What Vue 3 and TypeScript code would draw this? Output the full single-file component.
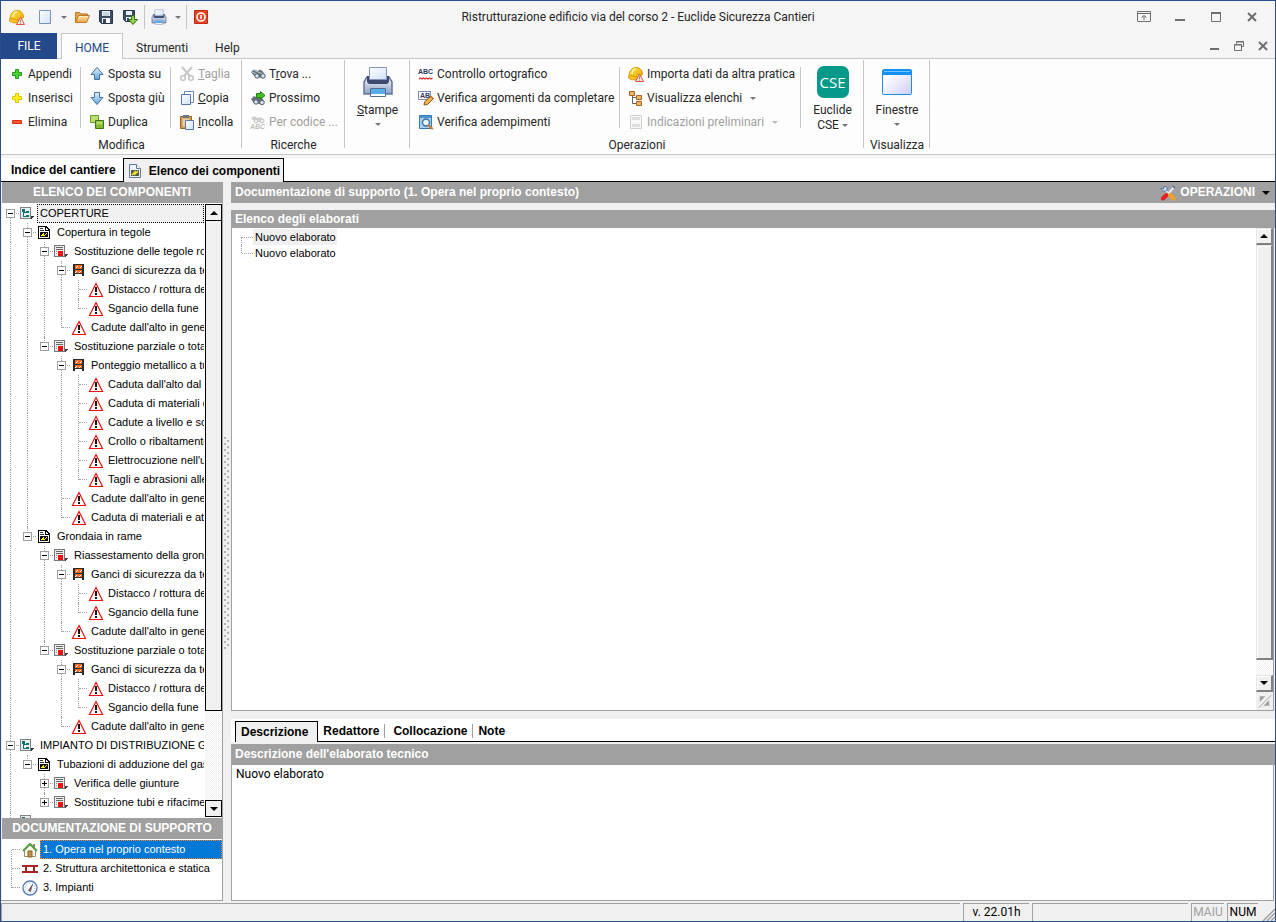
<script setup lang="ts">
import { computed, ref } from 'vue'

interface Command { icon: string; label: string; key?: number; disabled?: boolean; menu?: boolean; mark?: string }
interface Node { depth: number; icon: string; label: string; open?: boolean }
interface Row extends Node { guides: boolean[]; last: boolean; first: boolean }

const edit: Command[][] = [
  [
    { icon: 'plus-green', label: 'Appendi' },
    { icon: 'plus-yellow', label: 'Inserisci' },
    { icon: 'minus-red', label: 'Elimina' },
  ],
  [
    { icon: 'arrow-up', label: 'Sposta su' },
    { icon: 'arrow-down', label: 'Sposta giù' },
    { icon: 'duplicate', label: 'Duplica' },
  ],
  [
    { icon: 'cut', label: 'Taglia', key: 0, disabled: true },
    { icon: 'copy', label: 'Copia', key: 0 },
    { icon: 'paste', label: 'Incolla', key: 0 },
  ],
]
const search: Command[][] = [[
  { icon: 'find', label: 'Trova ...', key: 1 },
  { icon: 'find-next', label: 'Prossimo' },
  { icon: 'find-code', label: 'Per codice ...', disabled: true, mark: 'ABC' },
]]
const operations: Command[][] = [
  [
    { icon: 'spell', label: 'Controllo ortografico', mark: 'ABC' },
    { icon: 'check-args', label: 'Verifica argomenti da completare', mark: 'AB' },
    { icon: 'check-duties', label: 'Verifica adempimenti' },
  ],
  [
    { icon: 'helmet', label: 'Importa dati da altra pratica' },
    { icon: 'lists', label: 'Visualizza elenchi', menu: true },
    { icon: 'form', label: 'Indicazioni preliminari', disabled: true, menu: true },
  ],
]
const blocks = [
  { id: 'edit', title: 'Modifica', columns: edit },
  { id: 'search', title: 'Ricerche', columns: search },
]

const nodes: Node[] = [
  { depth: 0, icon: 'tree', label: 'COPERTURE', open: true },
  { depth: 1, icon: 'sheet', label: 'Copertura in tegole', open: true },
  { depth: 2, icon: 'work', label: 'Sostituzione delle tegole rot', open: true },
  { depth: 3, icon: 'barrier', label: 'Ganci di sicurezza da te', open: true },
  { depth: 4, icon: 'warn', label: 'Distacco / rottura de' },
  { depth: 4, icon: 'warn', label: 'Sgancio della fune' },
  { depth: 3, icon: 'warn', label: "Cadute dall'alto in gener" },
  { depth: 2, icon: 'work', label: 'Sostituzione parziale o total', open: true },
  { depth: 3, icon: 'barrier', label: 'Ponteggio metallico a tu', open: true },
  { depth: 4, icon: 'warn', label: "Caduta dall'alto dal p" },
  { depth: 4, icon: 'warn', label: 'Caduta di materiali d' },
  { depth: 4, icon: 'warn', label: 'Cadute a livello e sc' },
  { depth: 4, icon: 'warn', label: 'Crollo o ribaltamento' },
  { depth: 4, icon: 'warn', label: "Elettrocuzione nell'u" },
  { depth: 4, icon: 'warn', label: 'Tagli e abrasioni alle' },
  { depth: 3, icon: 'warn', label: "Cadute dall'alto in gener" },
  { depth: 3, icon: 'warn', label: 'Caduta di materiali e attr' },
  { depth: 1, icon: 'sheet', label: 'Grondaia in rame', open: true },
  { depth: 2, icon: 'work', label: 'Riassestamento della gronc', open: true },
  { depth: 3, icon: 'barrier', label: 'Ganci di sicurezza da te', open: true },
  { depth: 4, icon: 'warn', label: 'Distacco / rottura de' },
  { depth: 4, icon: 'warn', label: 'Sgancio della fune' },
  { depth: 3, icon: 'warn', label: "Cadute dall'alto in gener" },
  { depth: 2, icon: 'work', label: 'Sostituzione parziale o total', open: true },
  { depth: 3, icon: 'barrier', label: 'Ganci di sicurezza da te', open: true },
  { depth: 4, icon: 'warn', label: 'Distacco / rottura de' },
  { depth: 4, icon: 'warn', label: 'Sgancio della fune' },
  { depth: 3, icon: 'warn', label: "Cadute dall'alto in gener" },
  { depth: 0, icon: 'tree', label: 'IMPIANTO DI DISTRIBUZIONE G', open: true },
  { depth: 1, icon: 'sheet', label: 'Tubazioni di adduzione del gas', open: true },
  { depth: 2, icon: 'work', label: 'Verifica delle giunture', open: false },
  { depth: 2, icon: 'work', label: 'Sostituzione tubi e rifacimer', open: false },
  { depth: 0, icon: 'tree', label: '' },
]

// A trunk continues under a row when a later sibling exists at that level.
function continues(index: number, level: number): boolean {
  for (let j = index + 1; j < nodes.length; j++) {
    if (nodes[j].depth < level) return false
    if (nodes[j].depth === level) return true
  }
  return false
}
const rows = computed<Row[]>(() =>
  nodes.map((n, i) => ({
    ...n,
    guides: Array.from({ length: n.depth }, (_, k) => continues(i, k)),
    last: !continues(i, n.depth),
    first: i === 0,
  })),
)

const docs = [
  { icon: 'house', label: '1. Opera nel proprio contesto' },
  { icon: 'beam', label: '2. Struttura architettonica e statica' },
  { icon: 'gauge', label: '3. Impianti' },
]
const currentDoc = ref(0)
const description = ref('Nuovo elaborato')
const detailTabs = ['Descrizione', 'Redattore', 'Collocazione', 'Note']
const currentTab = ref(0)
</script>

<template>
  <svg class="defs" aria-hidden="true">
    <defs>
      <linearGradient id="gBlue" x1="0" y1="0" x2="0" y2="1"><stop offset="0" stop-color="#e4f2fc" /><stop offset="1" stop-color="#5fa5dc" /></linearGradient>
      <linearGradient id="gPage" x1="0" y1="0" x2="1" y2="1"><stop offset="0" stop-color="#ffffff" /><stop offset="1" stop-color="#cfe0fa" /></linearGradient>
      <linearGradient id="gFold" x1="0" y1="0" x2="0" y2="1"><stop offset="0" stop-color="#fff0c4" /><stop offset="1" stop-color="#e9a03c" /></linearGradient>
      <linearGradient id="gPrint" x1="0" y1="0" x2="0" y2="1"><stop offset="0" stop-color="#f4f6fb" /><stop offset="1" stop-color="#8fa0c6" /></linearGradient>
      <linearGradient id="gWin" x1="0" y1="0" x2="1" y2="1"><stop offset="0.2" stop-color="#ffffff" /><stop offset="1" stop-color="#cfcff8" /></linearGradient>
      <linearGradient id="gHat" x1="0" y1="0" x2="1" y2="1"><stop offset="0" stop-color="#ffe94a" /><stop offset="1" stop-color="#e8a200" /></linearGradient>
      <pattern id="dots" width="6" height="6" patternUnits="userSpaceOnUse"><path d="M0 0h2v2H0zM3 3h2v2H3z" fill="#b4b4b4" /></pattern>
    </defs>
    <symbol id="helmet" viewBox="0 0 16 16">
      <path d="M1 10.500C1 5 4 1.500 8 1.500c4.500 0 6.500 3.500 6.500 7L9 12.500 3 12z" fill="url(#gHat)" stroke="#d79a00" />
      <path d="M.5 10.500 2 9.500l7 1.500 1 2.500c-4 .8-7 .5-9.500-1.500z" fill="#ffc61a" stroke="#cf8a00" stroke-width=".8" />
      <path d="M4 8c.3-3 2-5 4-5.500" stroke="#fff7b0" stroke-width="1.400" fill="none" />
      <path d="m11.500 8 4 7.500h-8z" fill="#f4e4e0" stroke="#e05545" />
      <path d="M11.500 10.500v2.500M11.500 13.700v1" stroke="#888" />
    </symbol>
    <symbol id="page" viewBox="0 0 16 16"><path d="M2.500 1.500h11v13h-11z" fill="url(#gPage)" stroke="#7a94c2" /></symbol>
    <symbol id="folder" viewBox="0 0 16 16">
      <path d="M1.500 13.500v-10h4l1.500 1.500h6.500v2" fill="#e6a752" stroke="#ba7427" />
      <path d="M1.500 13.500 4.500 6.500h11l-3 7z" fill="url(#gFold)" stroke="#c07a28" />
    </symbol>
    <symbol id="save" viewBox="0 0 16 16">
      <path d="M1.500 1.500h13v13h-11l-2-2z" fill="#3c4e66" stroke="#27364b" />
      <path d="M4 2h8v5H4z" fill="#e9f1f8" /><path d="M4 9h8v5H4z" fill="#f8f8f8" /><path d="M5 10h3v4H5z" fill="#35465c" />
      <path d="M5 4h6M5 6h6" stroke="#a9bccd" />
    </symbol>
    <symbol id="save-down" viewBox="0 0 16 16">
      <path d="M1.500 1.500h11v11h-9l-2-2z" fill="#3c4e66" stroke="#27364b" />
      <path d="M4 2h6v4H4zM4 8h6v4H4z" fill="#e9f1f8" /><path d="M5 9h2v3H5z" fill="#35465c" />
      <path d="M9.500 6.500h3v4h3L11 15.500 6.500 10.500h3z" fill="#8fd044" stroke="#35700f" />
    </symbol>
    <symbol id="print" viewBox="0 0 32 32">
      <path d="M2 16 5 11h22l3 5v12H2z" fill="url(#gPrint)" stroke="#65749c" stroke-width="1.500" />
      <path d="M5 10h22v6l-2 2H7l-2-2z" fill="#3d4b70" />
      <path d="M7.500 1.500h17v12h-17z" fill="url(#gPage)" stroke="#8795b8" />
      <path d="M8.500 22.500h15v8h-15z" fill="#fff" stroke="#566a98" /><path d="M9 23h14v5H9z" fill="#55aee6" />
    </symbol>
    <symbol id="power" viewBox="0 0 16 16">
      <path d="M1.500 1.500h13v13h-13z" fill="#e64322" stroke="#bf2c12" />
      <circle cx="8" cy="8" r="4" fill="none" stroke="#fff" stroke-width="1.600" /><path d="M8 6v4" stroke="#fff" stroke-width="1.600" />
    </symbol>
    <symbol id="plus-green" viewBox="0 0 16 16"><path d="M6.500 3.500h3v3h3v3h-3v3h-3v-3h-3v-3h3z" fill="#4fd02e" stroke="#239c19" /></symbol>
    <symbol id="plus-yellow" viewBox="0 0 16 16"><path d="M6.500 3.500h3v3h3v3h-3v3h-3v-3h-3v-3h3z" fill="#fff01c" stroke="#d9c900" /></symbol>
    <symbol id="minus-red" viewBox="0 0 16 16"><path d="M3.500 6.500h9v3h-9z" fill="#fa5a32" stroke="#d62e10" /></symbol>
    <symbol id="arrow-up" viewBox="0 0 16 16"><path d="M8 1.500 14 8.500h-3.500v5h-5v-5H2z" fill="url(#gBlue)" stroke="#44739f" /></symbol>
    <symbol id="arrow-down" viewBox="0 0 16 16"><path d="M8 14.500 14 7.500h-3.500v-5h-5v5H2z" fill="url(#gBlue)" stroke="#44739f" /></symbol>
    <symbol id="duplicate" viewBox="0 0 16 16">
      <path d="M1.500 1.500h8v7h-8z" fill="#b9e06e" stroke="#659b22" /><path d="M6.500 6.500h8v8h-8z" fill="#82b936" stroke="#3d7513" /><path d="M7.500 7.500h6v3h-6z" fill="#b5da6c" />
    </symbol>
    <symbol id="cut" viewBox="0 0 16 16">
      <path d="m3 1 8 9M13 1 5 10" stroke="#cacaca" stroke-width="2.400" />
      <circle cx="4" cy="12" r="2.300" fill="none" stroke="#c4c4c4" stroke-width="1.500" /><circle cx="12" cy="12" r="2.300" fill="none" stroke="#c4c4c4" stroke-width="1.500" />
    </symbol>
    <symbol id="copy" viewBox="0 0 16 16"><path d="M5.500 1.500h9v11h-9z" fill="#fff" stroke="#6b88bd" /><path d="M2.500 4.500h9v10h-9z" fill="url(#gPage)" stroke="#5877ad" /></symbol>
    <symbol id="paste" viewBox="0 0 16 16">
      <path d="M1.500 2.500h11v12h-11z" fill="#d6984f" stroke="#9c6427" /><path d="M4 1h6v3H4z" fill="#6a768c" /><path d="M3.500 4.500h7v8h-7z" fill="#edd0a0" />
      <path d="M6.500 6.500h8v9h-8z" fill="url(#gPage)" stroke="#5b76a8" />
    </symbol>
    <symbol id="find" viewBox="0 0 16 16">
      <path d="M1 6 4 3.500l4 1.500 2-1.500 3 2 2.500 5-3 2-3-1-1 .5-3-1-3-3z" fill="#66717b" /><path d="m2 6 4 2M8 6l5 2M4 4l4 2" stroke="#b3bdc6" stroke-width="1.200" />
      <circle cx="7" cy="10" r="2.200" fill="#d8e4ee" stroke="#55616c" /><circle cx="13" cy="10" r="2.200" fill="#d8e4ee" stroke="#55616c" />
    </symbol>
    <symbol id="find-next" viewBox="0 0 16 16">
      <path d="m1 9 3-3 4 2h4l2.500 4-3 2.500-4-1-3 .5z" fill="#66717b" /><circle cx="6" cy="12" r="2.200" fill="#d8e4ee" stroke="#55616c" /><circle cx="12" cy="12.500" r="2.200" fill="#d8e4ee" stroke="#55616c" />
      <path d="M6.500 3.500h4v-2l4.500 4-4.500 4v-2h-4z" fill="#48bd28" stroke="#20850f" />
    </symbol>
    <symbol id="find-code" viewBox="0 0 16 16">
      <path d="m1 4 3-2 4 2 2-1 3 2 1 3-3 1-3-1-2 1z" fill="#cfcfcf" /><circle cx="6" cy="7" r="2" fill="#eee" stroke="#c4c4c4" /><circle cx="12" cy="7" r="2" fill="#eee" stroke="#c4c4c4" />
    </symbol>
    <symbol id="spell" viewBox="0 0 16 16">
      <path d="m1 13 1.500-1 1.500 1 1.500-1 1.500 1 1.500-1 1.500 1 1.500-1 1.500 1 1.500-1" fill="none" stroke="#e03030" stroke-width="1.200" />
    </symbol>
    <symbol id="check-args" viewBox="0 0 16 16">
      <path d="M.5 1.500h12v8H.5z" fill="#fff" stroke="#7089b5" />
      <path d="m6 15 .5-3 6-6 3 2.500-6 6z" fill="#f0b04e" stroke="#8a5a20" /><path d="m12 5.500 3 3" stroke="#d06a50" stroke-width="1.500" />
    </symbol>
    <symbol id="check-duties" viewBox="0 0 16 16">
      <path d="M1.500 1.500h12v13h-12z" fill="#a5d2f4" stroke="#3478b8" /><path d="M2 2h11v2H2z" fill="#4b95d4" />
      <circle cx="8" cy="8.500" r="3.500" fill="#e8f6ff" stroke="#426f9b" stroke-width="1.400" /><path d="m11 11.500 3 3" stroke="#c77f35" stroke-width="2.400" stroke-linecap="round" />
    </symbol>
    <symbol id="lists" viewBox="0 0 16 16">
      <path d="M4.500 5v8.500H9M4.500 7.500H9" fill="none" stroke="#61625e" />
      <path d="M1.500 1.500h5v4h-5zM8.500 5.500h5v4h-5zM8.500 11.500h5v4h-5z" fill="#f0b661" stroke="#a86520" />
    </symbol>
    <symbol id="form" viewBox="0 0 16 16"><path d="M2.500 1.500h11v13h-11z" fill="#f8f8f8" stroke="#d0d0d0" /><path d="M4 3h8v3H4zM4 10h8v3H4z" fill="#dedede" /></symbol>
    <symbol id="window" viewBox="0 0 32 32">
      <rect x="1.500" y="3.500" width="29" height="25" rx="1" fill="url(#gWin)" stroke="#1a8cf0" /><path d="M2 4h28v5H2z" fill="#1590f5" /><path d="M3 5h26v1H3z" fill="#75c2ff" />
    </symbol>
    <symbol id="tree" viewBox="0 0 16 16" shape-rendering="crispEdges">
      <path d="M0 1h11v12H0z" fill="#808080" /><path d="M1 2h9v10H1z" fill="#ececec" />
      <path d="M2 3h3v3H2zM6 5h3v2H6zM6 9h3v2H6zM3 6h1v5H3zM3 6h3v1H3zM3 10h3v1H3z" fill="#087472" />
      <path d="M11 10h3l-3 3z" fill="#333" />
    </symbol>
    <symbol id="sheet" viewBox="0 0 16 16" shape-rendering="crispEdges">
      <path d="M1 1h8l4 4v9H1z" fill="#000" /><path d="M2 2h6v4h4v7H2z" fill="#fff" /><path d="M9 3v2h2z" fill="#fff" />
      <path d="M3 3h3v1H3zM3 5h4v1H3z" fill="#333" /><path d="M3 7h8v5H3z" fill="#111" />
      <path d="M4 10h1V9h1V8h1v2h1V9h1V8h1v1H9v1H8v1H4z" fill="#ffef00" />
    </symbol>
    <symbol id="sheet-soft" viewBox="0 0 16 16">
      <path d="M2.500 1.500h7l4 4v9h-11z" fill="#edf3ff" stroke="#6678a2" /><path d="M9.500 1.500v4h4" fill="#fff" stroke="#6678a2" /><path d="M4 7h8v6H4z" fill="#555c52" /><path d="m5 12 3-3v2l3-3" fill="none" stroke="#ffed20" stroke-width="1.500" />
    </symbol>
    <symbol id="work" viewBox="0 0 16 16" shape-rendering="crispEdges">
      <path d="M0 1h11v12H0z" fill="#777" /><path d="M1 2h9v10H1z" fill="#eee" /><path d="M2 3h7v1H2zM2 5h7v1H2z" fill="#666" />
      <path d="M2 7h1v1H2zM2 9h1v1H2z" fill="#999" /><path d="M4 7h5v5H4z" fill="#ed1010" /><path d="M11 10h3l-3 3z" fill="#444" />
    </symbol>
    <symbol id="barrier" viewBox="0 0 16 16" shape-rendering="crispEdges">
      <path d="M3 2h9v4H3zM3 7h9v3H3z" fill="#ff6a1c" /><path d="M5 4h1V3h1v1H6v1H5zM9 4h1V3h1v1h-1v1H9zM4 9h1V8h1v1H5v1H4zM8 9h1V8h1v1H9v1H8z" fill="#fff" />
      <path d="M2 1h2v12H2zM11 1h2v12h-2zM2 1h11v1H2zM2 6h11v1H2zM2 10h11v1H2z" fill="#2a2a2a" />
    </symbol>
    <symbol id="warn" viewBox="0 0 16 16">
      <path d="m8 1.500 6.500 13h-13z" fill="#fff" stroke="#ec1010" stroke-width="1.200" /><path d="M7 5h2v5H7zM7 11h2v2H7z" fill="#151515" />
    </symbol>
    <symbol id="house" viewBox="0 0 16 16">
      <path d="M2.500 8v6.500h11V8L8 3z" fill="#fbf8e9" stroke="#949064" /><path d="M11 2h2v4h-2z" fill="#8f8060" />
      <path d="m1 9 7-7 7 7" fill="none" stroke="#55a044" stroke-width="2" /><path d="M6 9h4v6H6z" fill="#c5934e" stroke="#83612f" />
    </symbol>
    <symbol id="beam" viewBox="0 0 16 16" shape-rendering="crispEdges"><path d="M0 4h16v2H0zM0 10h16v2H0zM3 4h2v8H3zM11 4h2v8h-2z" fill="#a82424" /></symbol>
    <symbol id="gauge" viewBox="0 0 16 16">
      <circle cx="8" cy="8" r="7" fill="#f7fbff" stroke="#557ab0" stroke-width="1.300" /><circle cx="8" cy="8" r="4.800" fill="none" stroke="#8eacd2" stroke-dasharray="1 2" /><path d="m6.500 10.500 4-6-2 7z" fill="#c44030" stroke="#35496a" stroke-width=".6" />
    </symbol>
    <symbol id="tools" viewBox="0 0 16 16">
      <path d="m4 4 6 6" stroke="#c9dcf5" stroke-width="2" /><path d="M1 3.500 3.500 4 4 1.500C7 1 8 4 6.500 5.500 4.500 7 1.500 6 1 3.500z" fill="#c9dcf5" stroke="#3f5d8e" stroke-width=".8" />
      <path d="m14 2-6 7" stroke="#dceafa" stroke-width="2" /><path d="m12.500 1 2.500 2" stroke="#4b6793" stroke-width="1.500" />
      <path d="M3 13.500 6.500 10" stroke="#e81e1e" stroke-width="4" stroke-linecap="round" /><path d="m10 10 3.500 3.500" stroke="#f0a125" stroke-width="4" stroke-linecap="round" />
    </symbol>
  </svg>

  <div class="window">
    <header class="titlebar">
      <div class="quick">
        <svg class="ic"><use href="#helmet" /></svg>
        <button class="tool new" aria-label="Nuovo"><svg class="ic"><use href="#page" /></svg></button>
        <button class="tool drop" aria-label="Altri"><i class="caret"></i></button>
        <button class="tool" aria-label="Apri"><svg class="ic"><use href="#folder" /></svg></button>
        <button class="tool" aria-label="Salva"><svg class="ic"><use href="#save" /></svg></button>
        <button class="tool" aria-label="Salva con nome"><svg class="ic"><use href="#save-down" /></svg></button>
        <i class="bar"></i>
        <button class="tool" aria-label="Stampa"><svg class="ic"><use href="#print" /></svg></button>
        <button class="tool drop" aria-label="Altre stampe"><i class="caret"></i></button>
        <i class="bar"></i>
        <button class="tool" aria-label="Esci"><svg class="ic"><use href="#power" /></svg></button>
      </div>
      <h1>Ristrutturazione edificio via del corso 2 - Euclide Sicurezza Cantieri</h1>
      <div class="winbuttons">
        <button aria-label="Barra"><svg viewBox="0 0 14 12"><path d="M.5.5h13v10H.5zM1 2.500h12M7 9V5M4.500 6.500 7 4.500l2.500 2" /></svg></button>
        <button aria-label="Riduci"><svg viewBox="0 0 14 12"><path d="M2 9h10" stroke-width="2" /></svg></button>
        <button aria-label="Ingrandisci"><svg viewBox="0 0 14 12"><path d="M2.500 1.500h9v9h-9z" /><path d="M2 2h10" stroke-width="2" /></svg></button>
        <button aria-label="Chiudi"><svg viewBox="0 0 14 12"><path d="m3 2 8 8M11 2l-8 8" stroke-width="2" /></svg></button>
      </div>
    </header>

    <nav class="menu">
      <button class="file">FILE</button>
      <button class="mtab on">HOME</button>
      <button class="mtab">Strumenti</button>
      <button class="mtab help">Help</button>
      <div class="docbuttons">
        <button aria-label="Riduci documento"><svg viewBox="0 0 14 12"><path d="M2 9h9" stroke-width="2" /></svg></button>
        <button aria-label="Ripristina documento"><svg viewBox="0 0 14 12"><path d="M4.500 3.500v-2h7v5h-2M2.500 4.500h7v6h-7zM4 2h8M2 5h8" /></svg></button>
        <button aria-label="Chiudi documento"><svg viewBox="0 0 14 12"><path d="m3 2 8 8M11 2l-8 8" stroke-width="2" /></svg></button>
      </div>
    </nav>

    <section class="ribbon">
      <div v-for="b in blocks" :key="b.id" class="group" :class="b.id">
        <div class="cols">
          <div v-for="(col, ci) in b.columns" :key="ci" class="col">
            <button v-for="c in col" :key="c.label" class="cmd" :disabled="c.disabled">
              <span class="pic"><svg class="ic"><use :href="'#' + c.icon" /></svg><em v-if="c.mark" :class="c.icon">{{ c.mark }}</em></span>
              <span v-if="c.key !== undefined">{{ c.label.slice(0, c.key) }}<u>{{ c.label[c.key] }}</u>{{ c.label.slice(c.key + 1) }}</span>
              <span v-else>{{ c.label }}</span>
            </button>
          </div>
        </div>
        <div class="caption">{{ b.title }}</div>
      </div>
      <div class="group stampe">
        <button class="big"><svg class="ic32"><use href="#print" /></svg><span><u>S</u>tampe</span><i class="caret"></i></button>
      </div>
      <div class="group operations">
        <div class="cols">
          <div v-for="(col, ci) in operations" :key="ci" class="col">
            <button v-for="c in col" :key="c.label" class="cmd" :disabled="c.disabled">
              <span class="pic"><svg class="ic"><use :href="'#' + c.icon" /></svg><em v-if="c.mark" :class="c.icon">{{ c.mark }}</em></span>
              <span>{{ c.label }}</span><i v-if="c.menu" class="caret"></i>
            </button>
          </div>
          <button class="big"><b class="cse">CSE</b><span>Euclide</span><span class="line2">CSE <i class="caret"></i></span></button>
        </div>
        <div class="caption">Operazioni</div>
      </div>
      <div class="group view">
        <button class="big"><svg class="ic32"><use href="#window" /></svg><span>Finestre</span><i class="caret"></i></button>
        <div class="caption">Visualizza</div>
      </div>
    </section>

    <nav class="pages">
      <button class="page">Indice del cantiere</button>
      <button class="page on"><svg class="ic"><use href="#sheet-soft" /></svg>Elenco dei componenti</button>
      <span class="fill"></span>
    </nav>

    <main class="work">
      <aside class="side">
        <h2 class="head center">ELENCO DEI COMPONENTI</h2>
        <div class="treebox">
          <ul class="tree">
            <li v-for="(r, i) in rows" :key="i" class="row" :class="{ first: r.first }">
              <i v-for="(g, k) in r.guides" :key="k" class="cell"><i v-if="g" class="trunk"></i></i>
              <i class="cell own">
                <i class="trunk" :class="{ end: r.last, start: r.first }"></i><i class="stub"></i>
                <button v-if="r.open !== undefined" class="box" :aria-label="r.open ? 'Comprimi' : 'Espandi'"><svg viewBox="0 0 9 9"><path :d="r.open ? 'M2 4.5h5' : 'M2 4.5h5M4.5 2v5'" /></svg></button>
              </i>
              <svg class="ic"><use :href="'#' + r.icon" /></svg>
              <span v-if="r.label" class="name">{{ r.label }}</span>
            </li>
          </ul>
          <div class="scroll flat">
            <button aria-label="Su"><i class="tri up"></i></button>
            <div class="thumb"></div><div class="track"></div>
            <button aria-label="Giù"><i class="tri"></i></button>
          </div>
        </div>
        <h2 class="head center">DOCUMENTAZIONE DI SUPPORTO</h2>
        <ul class="docs">
          <li v-for="(d, i) in docs" :key="d.label">
            <i class="cell own"><i class="trunk" :class="{ end: i === docs.length - 1, start: i === 0 }"></i><i class="stub"></i></i>
            <svg class="ic"><use :href="'#' + d.icon" /></svg>
            <button :class="{ on: i === currentDoc }" @click="currentDoc = i">{{ d.label }}</button>
          </li>
        </ul>
      </aside>

      <div class="split"><svg><rect width="100%" height="100%" fill="url(#dots)" /></svg></div>

      <section class="content">
        <div class="head top">
          <h2>Documentazione di supporto (1. Opera nel proprio contesto)</h2>
          <button class="ops"><svg class="ic"><use href="#tools" /></svg>OPERAZIONI<i class="tri"></i></button>
        </div>
        <h3 class="head sub">Elenco degli elaborati</h3>
        <div class="listbox">
          <ul class="items">
            <li><i class="cell own"><i class="trunk start"></i><i class="stub"></i></i><span class="on">Nuovo elaborato</span></li>
            <li><i class="cell own"><i class="trunk end"></i><i class="stub"></i></i><span>Nuovo elaborato</span></li>
          </ul>
          <div class="scroll raised">
            <button aria-label="Su"><i class="tri up"></i></button>
            <div class="thumb"></div><div class="track"></div>
            <button aria-label="Giù"><i class="tri"></i></button>
            <svg class="corner" viewBox="0 0 18 18"><path d="M4 4h6L4 10zM14 14H8l6-6z" fill="#a0a0a0" /><path d="M3 16 16 3" stroke="#a0a0a0" /></svg>
          </div>
        </div>
        <nav class="tabs">
          <button v-for="(t, i) in detailTabs" :key="t" :class="{ on: i === currentTab }" @click="currentTab = i">{{ t }}</button>
          <span class="fill"></span>
        </nav>
        <label class="head desc" for="descr">Descrizione dell'elaborato tecnico</label>
        <textarea id="descr" v-model="description" spellcheck="false"></textarea>
      </section>
    </main>

    <footer class="status">
      <span class="grow"></span><span class="ver">v. 22.01h</span><span class="blank"></span><span class="lock off">MAIU</span><span class="lock num">NUM</span>
      <svg class="grip" viewBox="0 0 14 14"><path d="M2 14 14 2M6 14l8-8M10 14l4-4" stroke="#a0a0a0" stroke-width="1.500" /></svg>
    </footer>
  </div>
</template>

<style>
body { margin: 0; }
</style>

<style scoped>
* { box-sizing: border-box; }
button { font: inherit; color: inherit; background: none; border: 0; padding: 0; margin: 0; }
h1, h2, h3, ul { margin: 0; padding: 0; font: inherit; list-style: none; }
i { font-style: normal; }
.defs { position: absolute; width: 0; height: 0; }
.window { height: 100vh; display: flex; flex-direction: column; background: #f0f0f0; border: 1px solid #2a4f8c; font: 12px/16px Roboto, "Open Sans", sans-serif; color: #262626; overflow: hidden; }
.ic { width: 16px; height: 16px; flex: none; display: block; }
.ic32 { width: 32px; height: 32px; flex: none; }
.caret { display: inline-block; border: 3px solid transparent; border-top-color: #777; border-bottom: 0; flex: none; }
.tri { display: inline-block; border: 4px solid transparent; border-top-color: #000; border-bottom: 0; }
.tri.up { border-top: 0; border-bottom: 4px solid #000; }

.titlebar { flex: none; height: 32px; background: #f5f5f5; display: grid; grid-template-columns: 1fr auto 1fr; align-items: center; }
.quick { display: flex; align-items: center; gap: 8px; padding-left: 8px; }
.new { margin-left: 4px; }
.drop { display: flex; margin: 0 -1px 0 0; }
.bar { width: 1px; height: 24px; background: #c6c6c6; margin: 0 -2px; }
.titlebar h1 { line-height: 20px; }
.winbuttons, .docbuttons { display: flex; justify-content: flex-end; }
.winbuttons { gap: 22px; padding-right: 16px; }
.winbuttons svg, .docbuttons svg { width: 14px; height: 12px; display: block; fill: none; stroke: #6e6e6e; }
.menu { flex: none; height: 26px; background: #f5f5f5; display: flex; align-items: stretch; box-shadow: inset 0 -1px #c6c6c6; }
.file { width: 56px; background: #24498a; color: #fff; }
.mtab { padding: 4px 0 0; margin-left: 13px; }
.mtab.on { width: 62px; margin-left: 4px; background: #fdfdfd; border: 1px solid #c6c6c6; border-bottom: 0; color: #24498a; padding-top: 3px; }
.mtab.help { margin-left: 27px; }
.docbuttons { margin-left: auto; gap: 10px; padding-right: 5px; }

.ribbon { flex: none; height: 96px; background: #fdfdfd; border-bottom: 1px solid #c6c6c6; display: flex; }
.group { position: relative; display: flex; flex-direction: column; padding-top: 3px; }
.group::after { content: ""; position: absolute; right: 0; top: 1px; height: 88px; width: 1px; background: #c6c6c6; }
.cols { display: flex; flex: none; height: 72px; }
.col { position: relative; display: flex; flex-direction: column; }
.edit .col:not(:last-child)::after, .operations .col::after { content: ""; position: absolute; right: 0; top: 5px; height: 61px; width: 1px; background: #c6c6c6; }
.edit .col:nth-child(1) { width: 80px; }
.edit .col:nth-child(2) { width: 90px; }
.edit .col:nth-child(3) { width: 71px; }
.search { width: 103px; }
.operations .col:nth-child(1) { width: 210px; }
.operations .col:nth-child(2) { width: 181px; }
.cmd { height: 24px; display: flex; align-items: center; gap: 3px; padding-left: 8px; white-space: nowrap; }
.cmd .caret { margin-left: 5px; }
.cmd:disabled { color: #a0a0a0; }
.cmd:disabled .caret { border-top-color: #bbb; }
.pic { position: relative; flex: none; }
.pic em { position: absolute; left: 0; top: 2px; font: bold 7px/8px "Liberation Sans", Arial, sans-serif; color: #2d3b5e; }
.pic em.find-code { top: 9px; font-style: italic; color: #bdbdbd; }
.pic em.check-args { left: 2px; }
.caption { text-align: center; line-height: 22px; height: 22px; }
.big { display: flex; flex-direction: column; align-items: center; padding-top: 4px; height: 72px; flex: none; }
.big span { line-height: 15px; margin-top: 5px; }
.big .line2 { margin-top: 0; }
.big .line2 .caret { vertical-align: middle; }
.big > .caret { margin-top: 5px; }
.stampe { width: 65px; }
.operations .big { width: 63px; }
.view { width: 66px; }
.cse { width: 32px; height: 32px; flex: none; border-radius: 7px; background: #05998a; color: #fff; font: 15px/32px "Open Sans", sans-serif; text-align: center; }

.pages { flex: none; height: 27px; background: #fff; border-top: 3px solid #f5f5f5; display: flex; font: bold 12px/16px "Liberation Sans", Arial, sans-serif; color: #000; }
.page { width: 122px; padding-left: 10px; text-align: left; border-bottom: 1px solid #000; white-space: nowrap; }
.page.on { width: 161px; display: flex; align-items: center; justify-content: center; gap: 6px; border: 1px solid #000; border-bottom: 0; background: #f0f0f0; padding: 0; }
.fill { flex: 1; border-bottom: 1px solid #000; }

.work { flex: 1; min-height: 0; display: flex; }
.side { width: 222px; display: flex; flex-direction: column; border-right: 1px solid #a0a0a0; border-bottom: 1px solid #a0a0a0; margin-bottom: 2px; padding-left: 1px; }
.head { flex: none; height: 21px; background: #a0a0a0; color: #fff; font: bold 12px/21px "Liberation Sans", Arial, sans-serif; white-space: nowrap; }
.center { text-align: center; }
.treebox { flex: 1; min-height: 0; display: flex; background: #fff; overflow: hidden; }
.tree { flex: 1; min-width: 0; overflow: hidden; padding: 1px 1px 0 0; font: 11px/19px "Liberation Sans", Arial, sans-serif; color: #000; }
.row { display: flex; align-items: center; height: 19px; }
.cell { position: relative; width: 17px; height: 100%; flex: none; }
.row .ic { margin: 0 1px; }
.name { flex: 1; min-width: 0; overflow: hidden; white-space: nowrap; padding-left: 3px; line-height: 19px; }
.first .name { background: #f0f0f0; outline: 1px dotted #000; outline-offset: -1px; }
.trunk { position: absolute; left: 8px; top: 0; bottom: 0; border-left: 1px dotted #a0a0a0; }
.trunk.end { bottom: 50%; }
.trunk.start { top: 50%; }
.stub { position: absolute; left: 9px; right: 0; top: 9px; border-top: 1px dotted #a0a0a0; }
.box { position: absolute; left: 4px; top: 5px; width: 9px; height: 9px; background: #fff; border: 1px solid #a0a0a0; }
.box svg { display: block; width: 9px; height: 9px; margin: -1px; stroke: #000; }

.scroll { display: flex; flex-direction: column; width: 17px; flex: none; }
.scroll button { flex: none; height: 17px; display: flex; align-items: center; justify-content: center; background: #f0f0f0; }
.track { flex: 1; background: repeating-conic-gradient(#f0f0f0 0 25%, #fff 0 50%) 0 0 / 2px 2px; }
.flat { padding: 1px 0; }
.flat button, .flat .thumb { border: 1px solid #000; background: #f0f0f0; }
.flat .thumb { flex: none; height: 80%; border-top: 0; }
.raised button, .raised .thumb { background: #f0f0f0; border: 1px solid #e3e3e3; border-right: 2px solid #808080; border-bottom: 2px solid #808080; box-shadow: inset 1px 1px #fff; }
.raised .thumb { flex: none; height: 86%; }
.corner { width: 17px; height: 18px; background: #f0f0f0; flex: none; }

.docs { flex: none; height: 61px; padding-top: 1px; background: #fff; font: 11px/19px "Liberation Sans", Arial, sans-serif; color: #000; }
.docs li { display: flex; align-items: center; height: 19px; padding-left: 1px; }
.docs .ic { margin: 0 2px; }
.docs button { flex: 1; text-align: left; height: 19px; padding-left: 3px; white-space: nowrap; }
.docs button.on { background: #0078d7; color: #fff; outline: 1px dotted #ff8728; outline-offset: -1px; }

.split { width: 8px; display: flex; align-items: center; padding-left: 1px; }
.split svg { width: 6px; height: 212px; }
.content { flex: 1; min-width: 0; display: flex; flex-direction: column; }
.head.top { display: flex; justify-content: space-between; padding-left: 4px; margin-bottom: 7px; }
.ops { display: flex; align-items: center; gap: 4px; padding-right: 5px; }
.ops .tri { margin-left: 3px; }
.sub { height: 18px; line-height: 18px; padding-left: 4px; }
.listbox { flex: 1; min-height: 0; display: flex; justify-content: space-between; background: #fff; border: 1px solid #a0a0a0; border-top: 0; margin-right: 1px; }
.items { padding: 1px 0 0 1px; font: 11px/16px "Liberation Sans", Arial, sans-serif; color: #000; }
.items li { display: flex; height: 16px; }
.items .cell { width: 20px; }
.items span { padding: 0 1px 0 2px; }
.items .on { background: #f0f0f0; }
.items .stub { top: 8px; }
.tabs { flex: none; height: 23px; margin-top: 8px; padding-top: 2px; background: #fff; display: flex; font: bold 12px/16px "Liberation Sans", Arial, sans-serif; color: #000; }
.tabs button { position: relative; padding: 0 6px 0 5px; border-bottom: 1px solid #000; }
.tabs button:nth-child(3) { padding-left: 8px; }
.tabs button:nth-child(2)::after, .tabs button:nth-child(3)::after { content: ""; position: absolute; right: 0; top: 3px; height: 14px; width: 1px; background: #a0a0a0; }
.tabs button:first-child { margin-left: 4px; }
.tabs button.on { border: 1px solid #000; border-bottom: 0; background: #f0f0f0; padding: 0 9px 0 5px; }
.desc { display: block; height: 21px; margin-top: 2px; padding-left: 4px; }
textarea { flex: none; display: block; height: 136px; margin: 0 1px 2px 0; padding: 1px 4px; border: 1px solid #a0a0a0; border-top: 0; resize: none; outline: 0; font: 12px/16px Roboto, "Open Sans", sans-serif; color: #000; background: #fff; }

.status { flex: none; height: 18px; display: flex; gap: 3px; line-height: 16px; color: #000; }
.status span { border-left: 1px solid #a0a0a0; border-top: 1px solid #a0a0a0; text-align: center; }
.grow { flex: 1; }
.ver { width: 66px; }
.blank { width: 156px; }
.lock { width: 33px; }
.lock.num { width: 31px; }
.lock.off { color: #a0a0a0; }
.grip { width: 14px; height: 14px; align-self: flex-end; }
</style>
